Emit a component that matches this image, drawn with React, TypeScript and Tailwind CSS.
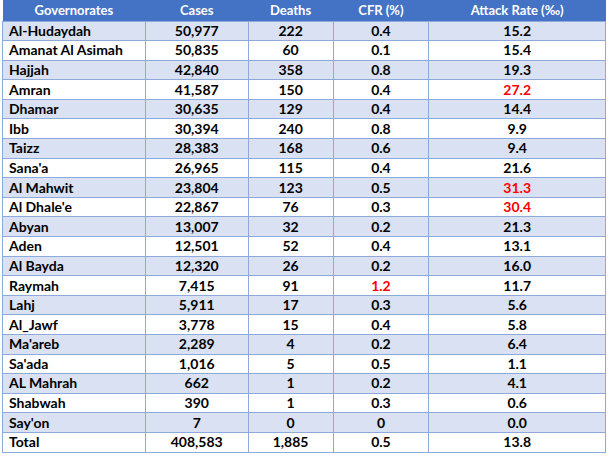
const rows: [string, string, string, string, string, string?][] = [
  ['Al-Hudaydah', '50,977', '222', '0.4', '15.2'],
  ['Amanat Al Asimah', '50,835', '60', '0.1', '15.4'],
  ['Hajjah', '42,840', '358', '0.8', '19.3'],
  ['Amran', '41,587', '150', '0.4', '27.2', 'ar'],
  ['Dhamar', '30,635', '129', '0.4', '14.4'],
  ['Ibb', '30,394', '240', '0.8', '9.9'],
  ['Taizz', '28,383', '168', '0.6', '9.4'],
  ["Sana'a", '26,965', '115', '0.4', '21.6'],
  ['Al Mahwit', '23,804', '123', '0.5', '31.3', 'ar'],
  ["Al Dhale'e", '22,867', '76', '0.3', '30.4', 'ar'],
  ['Abyan', '13,007', '32', '0.2', '21.3'],
  ['Aden', '12,501', '52', '0.4', '13.1'],
  ['Al Bayda', '12,320', '26', '0.2', '16.0'],
  ['Raymah', '7,415', '91', '1.2', '11.7', 'cfr'],
  ['Lahj', '5,911', '17', '0.3', '5.6'],
  ['Al_Jawf', '3,778', '15', '0.4', '5.8'],
  ["Ma'areb", '2,289', '4', '0.2', '6.4'],
  ["Sa'ada", '1,016', '5', '0.5', '1.1'],
  ['AL Mahrah', '662', '1', '0.2', '4.1'],
  ['Shabwah', '390', '1', '0.3', '0.6'],
  ["Say'on", '7', '0', '0', '0.0'],
  ['Total', '408,583', '1,885', '0.5', '13.8'],
];

export default function App() {
  return (
    <div className="w-[612px] h-[459px] bg-white pl-[2px] pr-[6px]" style={{ fontFamily: 'Lato, "Open Sans", sans-serif' }}>
      <table className="w-[604px] border-collapse text-[14px] font-bold leading-none">
        <colgroup>
          <col className="w-[143px]" />
          <col className="w-[103px]" />
          <col className="w-[85px]" />
          <col className="w-[96px]" />
          <col className="w-[177px]" />
        </colgroup>
        <thead>
          <tr className="h-[21px] bg-[#4472c4] text-white text-[13px]">
            <th className="text-center font-bold">Governorates</th>
            <th className="text-center font-bold">Cases</th>
            <th className="text-center font-bold">Deaths</th>
            <th className="text-center font-bold">CFR (%)</th>
            <th className="text-center font-bold">Attack Rate (‰)</th>
          </tr>
        </thead>
        <tbody className="text-black">
          {rows.map((r, i) => (
            <tr key={r[0]} className={`h-[19.6px] ${i % 2 === 0 ? 'bg-[#d9e1f2]' : 'bg-white'}`}>
              <td className="border border-[#8eaadb] pl-[6px] text-left">{r[0]}</td>
              <td className="border border-[#8eaadb] text-center">{r[1]}</td>
              <td className="border border-[#8eaadb] text-center">{r[2]}</td>
              <td className={`border border-[#8eaadb] text-center ${r[5] === 'cfr' ? 'text-[#ff0000]' : ''}`}>{r[3]}</td>
              <td className={`border border-[#8eaadb] text-center ${r[5] === 'ar' ? 'text-[#ff0000]' : ''}`}>{r[4]}</td>
            </tr>
          ))}
        </tbody>
      </table>
    </div>
  );
}
